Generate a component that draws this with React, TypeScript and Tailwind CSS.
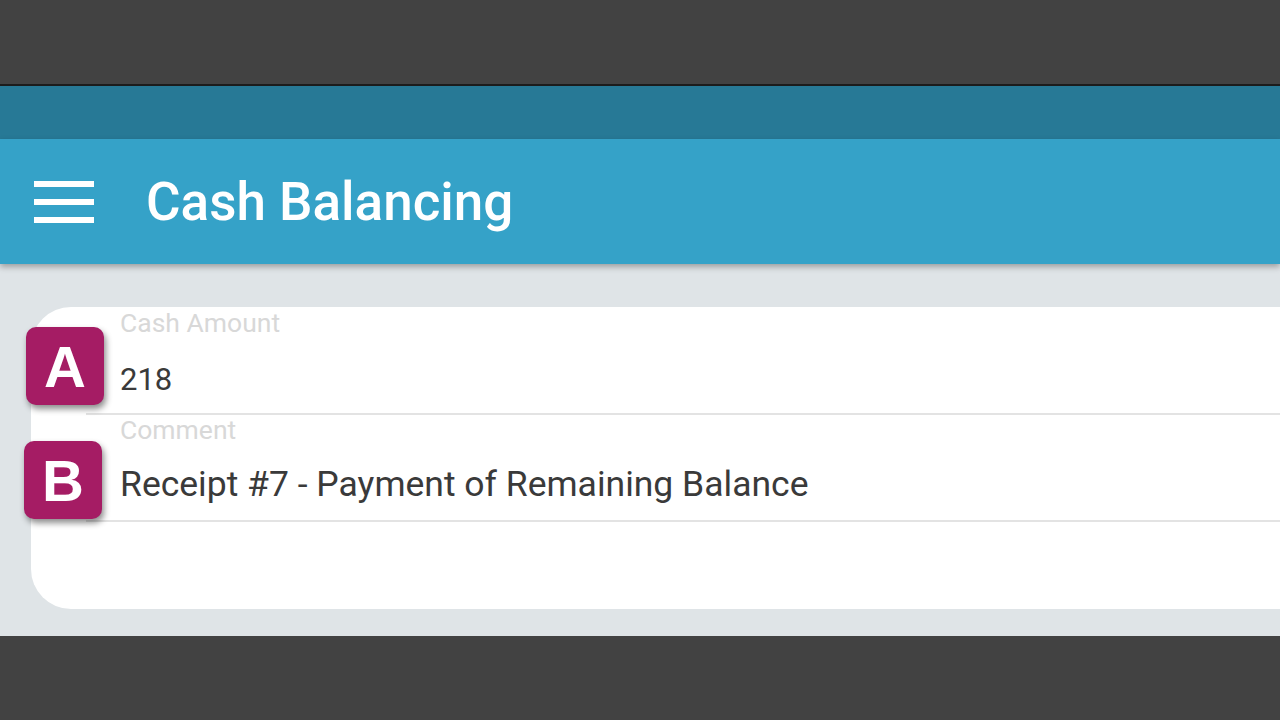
function Badge({ letter, className }: { letter: string; className: string }) {
  return (
    <div
      className={`absolute w-[78px] h-[78px] rounded-[10px] bg-[#a51c64] text-white flex items-center justify-center text-[58px] font-bold shadow-[2px_4px_6px_rgba(0,0,0,0.45)] ${className}`}
      style={{ fontFamily: '"Liberation Sans", Arial, sans-serif' }}
    >
      {letter}
    </div>
  );
}

function Field({ label, value, valueSize }: { label: string; value: string; valueSize: string }) {
  return (
    <div className="ml-[55px] border-b-2 border-[#e3e3e3] h-[107px] flex flex-col pl-[34px]">
      <span className="text-[26.5px] leading-none text-[#d8d8d8] mt-[2px]">{label}</span>
      <span className={`${valueSize} leading-none text-[#3a3a3a] mt-auto mb-[18px]`}>{value}</span>
    </div>
  );
}

export default function App() {
  return (
    <div
      className="w-[1280px] h-[720px] bg-[#424242] flex flex-col overflow-hidden"
      style={{ fontFamily: 'Roboto, "Noto Sans", sans-serif' }}
    >
      <div className="h-[86px] bg-[#424242] border-b-2 border-[#1c1c1c]" />
      <div className="h-[53px] bg-[#277996]" />
      <div className="relative z-10 h-[125px] bg-[#35a2c8] flex items-center shadow-[0_3px_6px_rgba(0,0,0,0.3)]">
        <div className="w-[60px] ml-[34px] flex flex-col gap-[12px]">
          <span className="h-[6px] bg-white" />
          <span className="h-[6px] bg-white" />
          <span className="h-[6px] bg-white" />
        </div>
        <h1 className="ml-[52px] text-white text-[53px] font-medium mt-[2px]">Cash Balancing</h1>
      </div>
      <div className="h-[372px] bg-[#dfe4e7] pt-[43px] pl-[31px]">
        <div className="relative bg-white rounded-l-[40px] h-[302px] pt-[1px]">
          <Field label="Cash Amount" value="218" valueSize="text-[31px]" />
          <Field label="Comment" value="Receipt #7 - Payment of Remaining Balance" valueSize="text-[35.5px]" />
          <Badge letter="A" className="left-[-5px] top-[20px]" />
          <Badge letter="B" className="left-[-7px] top-[134px]" />
        </div>
      </div>
      <div className="flex-1 bg-[#424242]" />
    </div>
  );
}
